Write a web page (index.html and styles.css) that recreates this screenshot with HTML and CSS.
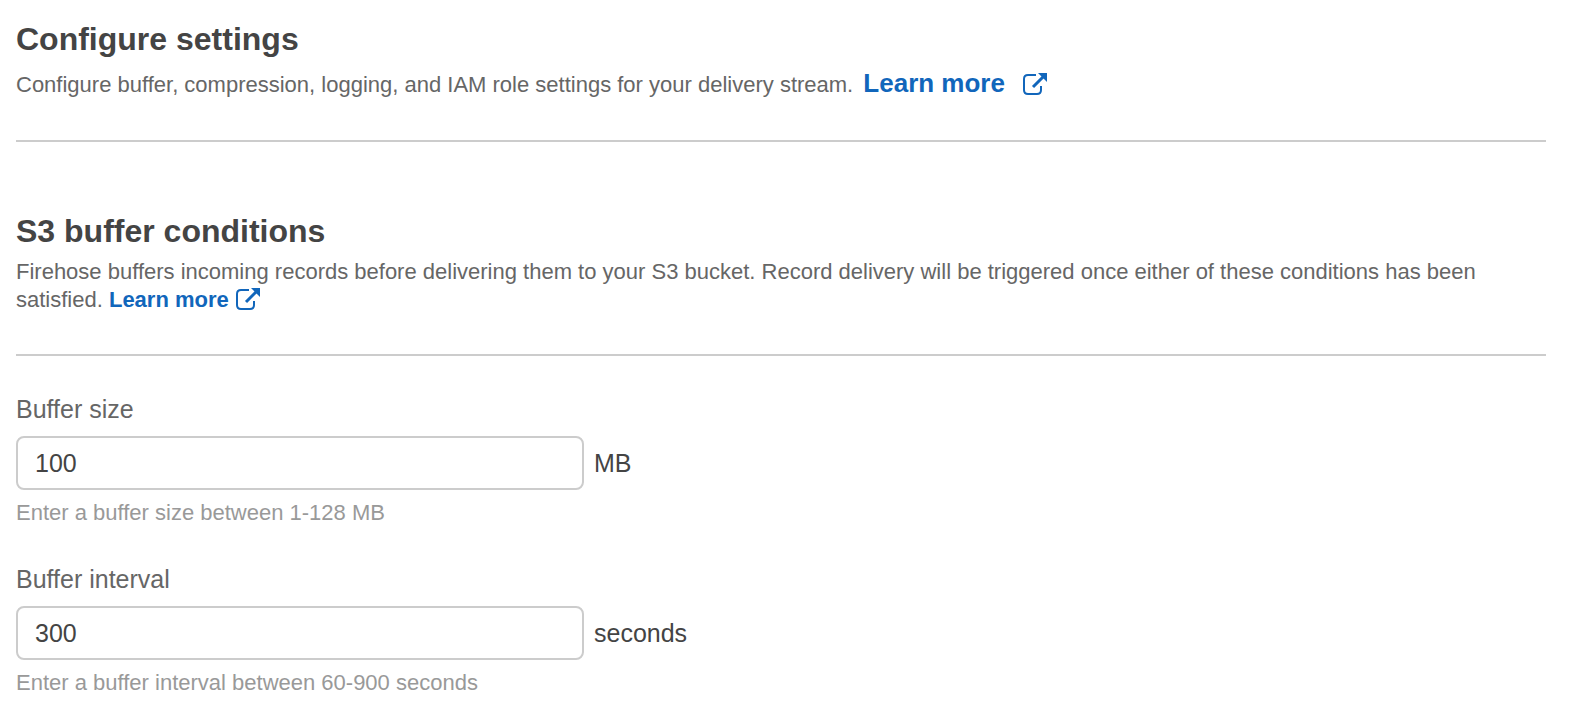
FILE: index.html
```html
<!DOCTYPE html>
<html lang="en">
<head>
<meta charset="utf-8">
<meta name="viewport" content="width=device-width, initial-scale=1">
<title>Configure settings</title>
<link rel="stylesheet" href="styles.css">
</head>
<body>
<svg class="sprite" aria-hidden="true">
  <symbol id="external" viewBox="0 0 26 24">
    <path d="M14 3H6Q2 3 2 7v11q0 4 4 4h9q4 0 4-4v-4" fill="none" stroke="currentColor" stroke-width="2"/>
    <path d="M11 15 21 5" fill="none" stroke="currentColor" stroke-width="3"/>
    <path d="M16 1h9v9z" fill="currentColor"/>
  </symbol>
</svg>
<main class="page">
  <header class="section section-intro">
    <h1 class="title">Configure settings</h1>
    <p class="description">Configure buffer, compression, logging, and IAM role settings for your delivery stream. <a class="link link-large" href="#">Learn more <svg class="icon" aria-hidden="true"><use href="#external"/></svg></a></p>
  </header>
  <section class="section section-buffer">
    <h2 class="title">S3 buffer conditions</h2>
    <p class="description">Firehose buffers incoming records before delivering them to your S3 bucket. Record delivery will be triggered once either of these conditions has been satisfied. <a class="link" href="#">Learn more <svg class="icon" aria-hidden="true"><use href="#external"/></svg></a></p>
  </section>
  <form class="fields">
    <div class="field">
      <label class="label" for="size">Buffer size</label>
      <div class="control">
        <input class="input" id="size" type="text" value="100" aria-describedby="size-unit size-help">
        <span class="unit" id="size-unit">MB</span>
      </div>
      <p class="help" id="size-help">Enter a buffer size between 1-128 MB</p>
    </div>
    <div class="field">
      <label class="label" for="interval">Buffer interval</label>
      <div class="control">
        <input class="input" id="interval" type="text" value="300" aria-describedby="interval-unit interval-help">
        <span class="unit" id="interval-unit">seconds</span>
      </div>
      <p class="help" id="interval-help">Enter a buffer interval between 60-900 seconds</p>
    </div>
  </form>
</main>
</body>
</html>
```
FILE: styles.css
```css
* { box-sizing: border-box; }

body {
  margin: 0;
  background: #fff;
  color: #444;
  font-family: "Helvetica Neue", "Liberation Sans", Arial, sans-serif;
  font-size: 22px;
  line-height: 28px;
}

.sprite { position: absolute; width: 0; height: 0; }

.page { padding: 18px 48px 20px 16px; }

.section { border-bottom: 2px solid #ccc; }
.section-intro { padding-bottom: 32px; }
.section-buffer { padding: 68px 0 40px; }

.title {
  margin: 0;
  font-size: 32px;
  line-height: 42px;
  font-weight: 700;
  color: #444;
}

.description { margin: 0; color: #666; }
.section-intro .description { line-height: 46px; }
.section-buffer .description { margin-top: 6px; }

.link {
  color: #1166bb;
  font-weight: 700;
  text-decoration: none;
  white-space: nowrap;
}
.link:hover { text-decoration: underline; }
.link-large { margin-left: 4px; font-size: 26px; }

.icon { width: 26px; height: 24px; vertical-align: -4px; }
.link-large .icon { margin-left: 10px; }

.fields { display: grid; gap: 34px; padding-top: 36px; }

.label { display: block; font-size: 25px; line-height: 34px; color: #666; }
.control { display: flex; align-items: center; gap: 10px; margin-top: 10px; }

.input {
  width: 568px;
  min-width: 0;
  padding: 10px 17px;
  border: 2px solid #ccc;
  border-radius: 8px;
  background: #fff;
  color: #444;
  font-family: inherit;
  font-size: 25px;
  line-height: 30px;
}
.input:focus { outline: 0; border-color: #1166bb; }

.unit { font-size: 25px; }
.help { margin: 8px 0 0; color: #999; line-height: 30px; }
```
